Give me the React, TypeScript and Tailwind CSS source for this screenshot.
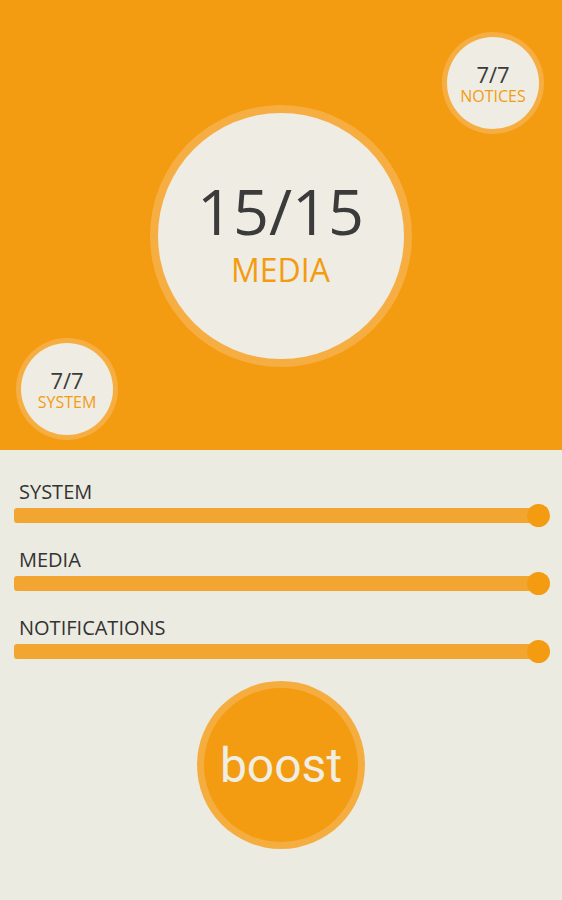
import React from "react";

const sliders = ["SYSTEM", "MEDIA", "NOTIFICATIONS"];

function Bubble({ value, label, className }: { value: string; label: string; className: string }) {
  return (
    <div className={`absolute w-[102px] h-[102px] rounded-full bg-[#f6ae42] p-[5px] ${className}`}>
      <div className="w-full h-full rounded-full bg-[#eeece3] flex flex-col items-center justify-center">
        <div className="text-[22px] leading-[24px] text-[#3b3b3b]">{value}</div>
        <div className="mt-[1px] text-[16px] leading-[18px] text-[#f39c12]">{label}</div>
      </div>
    </div>
  );
}

export default function App() {
  return (
    <div className="w-[562px] h-[900px] bg-[#ecebe1] font-['Open_Sans',sans-serif] overflow-hidden">
      {/* header */}
      <div className="relative h-[450px] bg-[#f39c12] flex justify-center pt-[105px]">
        <Bubble value="7/7" label="NOTICES" className="top-[32px] left-[442px]" />
        <Bubble value="7/7" label="SYSTEM" className="top-[338px] left-[16px]" />

        <div className="w-[262px] h-[262px] ml-[-1px] rounded-full bg-[#f6ae42] p-[8px]">
          <div className="w-full h-full rounded-full bg-[#eeece3] flex flex-col items-center justify-center pb-[6px]">
            <div className="text-[63px] leading-[64px] text-[#3b3b3b]">15/15</div>
            <div className="mt-[9px] text-[32px] leading-[36px] text-[#f39c12]">MEDIA</div>
          </div>
        </div>
      </div>

      {/* sliders */}
      <div className="px-[14px] pt-[32px]">
        {sliders.map((s) => (
          <div key={s} className="mb-[27px] w-[536px]">
            <div className="pl-[5px] text-[20px] leading-[20px] text-[#333333]">{s}</div>
            <div className="relative mt-[6px] h-[15px]">
              <div className="h-full w-[526px] rounded-[3px] bg-[#f2a631]" />
              <div className="absolute right-0 top-[-4px] w-[23px] h-[23px] rounded-full bg-[#f39c12]" />
            </div>
          </div>
        ))}
      </div>

      {/* boost */}
      <div className="flex justify-center mt-[-5px]">
        <div className="w-[168px] h-[168px] rounded-full bg-[#f5ad3f] p-[7px]">
          <div className="w-full h-full rounded-full bg-[#f39c12] flex items-center justify-center pt-[2px]">
            <span className="font-['Roboto',sans-serif] text-[48px] leading-[48px] text-[#efeee4]">boost</span>
          </div>
        </div>
      </div>
    </div>
  );
}
